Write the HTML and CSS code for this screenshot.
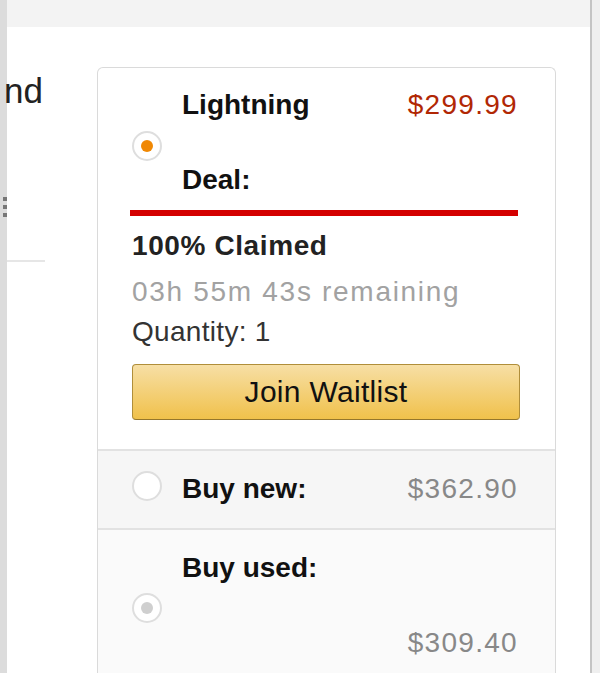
FILE: index.html
```html
<html lang="en">
<head>
    <meta charset="UTF-8">
    <meta name="viewport" content="width=device-width, initial-scale=1.0">
    <title>Lightning Deal</title>
    <link rel="stylesheet" href="styles.css">
</head>
<body>

<div class="frame">
    <div class="edge-left">
        <span class="dot"></span>
        <span class="dot"></span>
        <span class="dot"></span>
    </div>

    <div class="main">
        <div class="topbar"></div>
        <div class="content">
            <div class="side">
                <div class="side-title">nd</div>
                <div class="side-rule"></div>
            </div>

            <div class="card">
                <div class="deal">
                    <div class="opt">
                        <span class="radio on"></span>
                        <div class="opt-body">
                            <div class="line">
                                <b>Lightning</b>
                                <span class="price red">$299.99</span>
                            </div>
                            <div class="line"><b>Deal:</b></div>
                        </div>
                    </div>
                    <div class="red-bar"></div>
                    <div class="claimed">100% Claimed</div>
                    <div class="remaining">03h 55m 43s remaining</div>
                    <div class="qty">Quantity: 1</div>
                    <button class="waitlist">Join Waitlist</button>
                </div>

                <div class="row new">
                    <div class="opt">
                        <span class="radio"></span>
                        <div class="opt-body">
                            <div class="line">
                                <b>Buy new:</b>
                                <span class="price">$362.90</span>
                            </div>
                        </div>
                    </div>
                </div>

                <div class="row used">
                    <div class="opt">
                        <span class="radio dim"></span>
                        <div class="opt-body">
                            <div class="line"><b>Buy used:</b></div>
                            <div class="line end"><span class="price">$309.40</span></div>
                        </div>
                    </div>
                </div>
            </div>
        </div>
    </div>

    <div class="edge-line"></div>
    <div class="edge-right"></div>
</div>

</body>
</html>
```

FILE: styles.css
```css
body {
    margin: 0;
    font-family: "Liberation Sans", Arial, sans-serif;
    background: #fff;
    color: #111;
    overflow: hidden;
}
.frame {
    display: flex;
    height: 673px;
    overflow: hidden;
}
.edge-left {
    width: 7px;
    flex-shrink: 0;
    background-color: #dcdcdc;
    display: flex;
    flex-direction: column;
    gap: 4px;
    padding-top: 197px;
    box-sizing: border-box;
}
.dot {
    width: 4px;
    height: 4px;
    margin-left: 3px;
    background-color: #777;
}
.main {
    flex: 1;
    display: flex;
    flex-direction: column;
    min-width: 0;
}
.topbar {
    height: 27px;
    flex-shrink: 0;
    background-color: #f3f3f3;
}
.content {
    display: flex;
    flex: 1;
    min-height: 0;
}
.edge-line {
    width: 2px;
    flex-shrink: 0;
    background-color: #c4c4c4;
}
.edge-right {
    width: 8px;
    flex-shrink: 0;
    background-color: #efefef;
}

.side {
    width: 90px;
    flex-shrink: 0;
}
.side-title {
    font-size: 35px;
    line-height: 44px;
    margin-top: 42px;
    margin-left: -3px;
    color: #222;
}
.side-rule {
    width: 38px;
    height: 2px;
    margin-top: 147px;
    background-color: #e6e6e6;
}

.card {
    width: 459px;
    height: 620px;
    flex-shrink: 0;
    margin-top: 40px;
    border: 1px solid #dadada;
    border-bottom: none;
    border-radius: 6px 6px 0 0;
    box-sizing: border-box;
    font-size: 28px;
    line-height: 32px;
}
.deal {
    padding: 21px 37px 29px 34px;
    border-bottom: 2px solid #e2e2e2;
}
.opt {
    display: flex;
    align-items: center;
}
.opt-body {
    flex: 1;
    display: flex;
    flex-direction: column;
    gap: 43px;
}
.line {
    display: flex;
    justify-content: space-between;
}
.line.end {
    justify-content: flex-end;
}
b {
    font-weight: bold;
    color: #111;
}
.price {
    color: #888;
    letter-spacing: 1.3px;
}
.price.red {
    color: #b12704;
}
.radio {
    width: 30px;
    height: 30px;
    margin-right: 20px;
    border: 2px solid #dedede;
    border-radius: 50%;
    box-sizing: border-box;
    background-color: #fff;
    display: flex;
    align-items: center;
    justify-content: center;
    flex-shrink: 0;
}
.deal .radio {
    margin-top: 6px;
}
.radio.on::after,
.radio.dim::after {
    content: '';
    width: 12px;
    height: 12px;
    border-radius: 50%;
    background-color: #f08804;
}
.radio.dim::after {
    background-color: #cfcfcf;
}
.red-bar {
    height: 6px;
    margin-top: 14px;
    margin-left: -2px;
    background-color: #d40000;
}
.claimed {
    margin-top: 14px;
    font-weight: bold;
    color: #222;
    letter-spacing: 0.6px;
}
.remaining {
    margin-top: 14px;
    color: #a2a2a2;
    letter-spacing: 1.7px;
}
.qty {
    margin-top: 8px;
    color: #333;
    letter-spacing: 0.3px;
}
.waitlist {
    display: block;
    width: calc(100% + 2px);
    height: 56px;
    margin-top: 16px;
    border: 1px solid #b08e3a;
    border-bottom-color: #94762c;
    border-radius: 4px;
    background: linear-gradient(to bottom, #f7dfa5, #f0c14b);
    font-family: "Liberation Sans", Arial, sans-serif;
    font-size: 30px;
    color: #111;
    letter-spacing: 0.3px;
    cursor: pointer;
}
.row {
    padding: 22px 37px 23px 34px;
}
.row.new {
    background-color: #f6f6f6;
    border-bottom: 2px solid #e2e2e2;
}
.row.used {
    background-color: #fafafa;
    height: 160px;
    box-sizing: border-box;
}
.row.new .radio {
    margin-top: -6px;
}
.row.used .radio {
    margin-top: 4px;
}
```
